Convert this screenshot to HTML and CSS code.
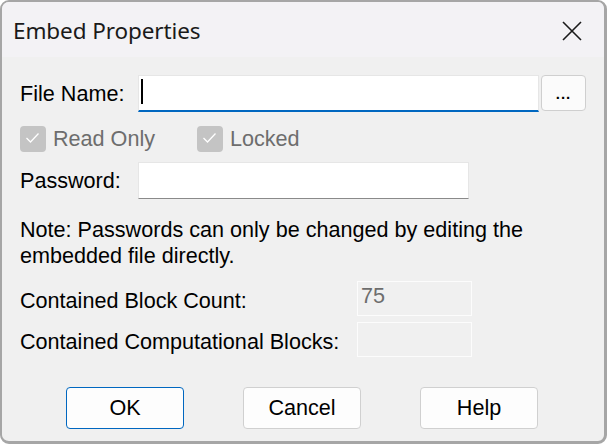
FILE: index.html
```html
<!DOCTYPE html>
<html>
<head>
<meta charset="utf-8">
<link rel="stylesheet" href="styles.css">
</head>
<body>
<div class="window">
  <div class="titlebar">
    <span class="title">Embed Properties</span>
    <svg class="close" width="20" height="20" viewBox="0 0 20 20"><path d="M1 1L19 19M19 1L1 19" stroke="#1a1a1a" stroke-width="1.6" fill="none"/></svg>
  </div>
  <div class="content">
    <div class="row file-row">
      <label class="label">File Name:</label>
      <div class="input focused"><span class="caret"></span></div>
      <div class="browse"><span class="dots">...</span></div>
    </div>
    <div class="row check-row">
      <div class="check"><span class="box"><svg width="26" height="26" viewBox="0 0 26 26"><path d="M6.5 12L10.5 16L18.5 7.5" stroke="#fff" stroke-width="1.3" fill="none"/></svg></span><span class="check-label">Read Only</span></div>
      <div class="check"><span class="box"><svg width="26" height="26" viewBox="0 0 26 26"><path d="M6.5 12L10.5 16L18.5 7.5" stroke="#fff" stroke-width="1.3" fill="none"/></svg></span><span class="check-label">Locked</span></div>
    </div>
    <div class="row pw-row">
      <label class="label">Password:</label>
      <div class="input pw"></div>
    </div>
    <p class="note">Note: Passwords can only be changed by editing the<br>embedded file directly.</p>
    <div class="row stat-row first">
      <span class="stat-label">Contained Block Count:</span>
      <div class="stat">75</div>
    </div>
    <div class="row stat-row">
      <span class="stat-label">Contained Computational Blocks:</span>
      <div class="stat"></div>
    </div>
    <div class="buttons">
      <div class="btn default">OK</div>
      <div class="btn">Cancel</div>
      <div class="btn">Help</div>
    </div>
  </div>
</div>
</body>
</html>
```

FILE: styles.css
```css
html, body {
  margin: 0;
  padding: 0;
  background: #ffffff;
}
.window {
  width: 607px;
  height: 444px;
  box-sizing: border-box;
  border-style: solid;
  border-color: #a6a6a6;
  border-width: 2px 3px 3px 2px;
  border-radius: 9px;
  background: #f0f0f0;
  overflow: hidden;
  font-family: "Liberation Sans", Arial, sans-serif;
  font-size: 21.6px;
  color: #000;
}
.titlebar {
  height: 55px;
  background: #f3f2f5;
  display: flex;
  align-items: center;
  justify-content: space-between;
  padding: 0 22px 0 11px;
}
.title {
  font-family: "Noto Sans", "Open Sans", sans-serif;
  font-size: 22.5px;
  color: #1a1a1a;
  letter-spacing: -0.1px;
  margin-top: 2px;
}
.close {
  margin-top: 2px;
}
.content {
  padding: 18px 0 0 18px;
}
.row {
  display: flex;
  align-items: center;
}
.label {
  width: 118px;
}
.input {
  box-sizing: border-box;
  background: #fff;
  border: 1px solid #e6e6e6;
}
.input.focused {
  width: 401px;
  height: 37px;
  border-bottom: 2px solid #0067c0;
  display: flex;
  align-items: center;
  padding-left: 2px;
}
.caret {
  width: 1.5px;
  height: 25px;
  background: #000;
  margin-top: -4px;
}
.browse {
  box-sizing: border-box;
  width: 45px;
  height: 36px;
  margin-left: 2px;
  margin-top: -1px;
  border: 1px solid #cfcfcf;
  border-radius: 4px;
  background: #fbfbfb;
  display: flex;
  justify-content: center;
  font-size: 15px;
  font-weight: bold;
}
.dots {
  margin-top: 9px;
  letter-spacing: 1px;
}
.check-row {
  margin-top: 14px;
  height: 26px;
}
.check {
  display: flex;
  align-items: center;
  width: 177px;
}
.box {
  width: 26px;
  height: 26px;
  border-radius: 4px;
  background: #c4c4c4;
  display: block;
}
.box svg {
  display: block;
}
.check-label {
  margin-left: 7px;
  color: #6d6d6d;
}
.pw-row {
  margin-top: 10px;
}
.input.pw {
  width: 331px;
  height: 37px;
  border-bottom: 1px solid #8a8a8a;
}
.note {
  margin: 18px 0 0 0;
  line-height: 26px;
}
.stat-row {
  height: 35px;
  margin-top: 6px;
}
.stat-row.first {
  margin-top: 12px;
}
.stat-label {
  width: 337px;
  margin-top: 4px;
}
.stat {
  box-sizing: border-box;
  width: 115px;
  height: 35px;
  border: 1px solid #fcfcfc;
  color: #6d6d6d;
  padding: 2px 0 0 3px;
  line-height: 24px;
  align-self: flex-start;
}
.buttons {
  display: flex;
  gap: 59px;
  margin-top: 30px;
  padding-left: 46px;
}
.btn {
  box-sizing: border-box;
  width: 118px;
  height: 42px;
  background: #fdfdfd;
  border: 1px solid #d0d0d0;
  border-radius: 4px;
  display: flex;
  align-items: center;
  justify-content: center;
}
.btn.default {
  border-color: #0067c0;
}
```
